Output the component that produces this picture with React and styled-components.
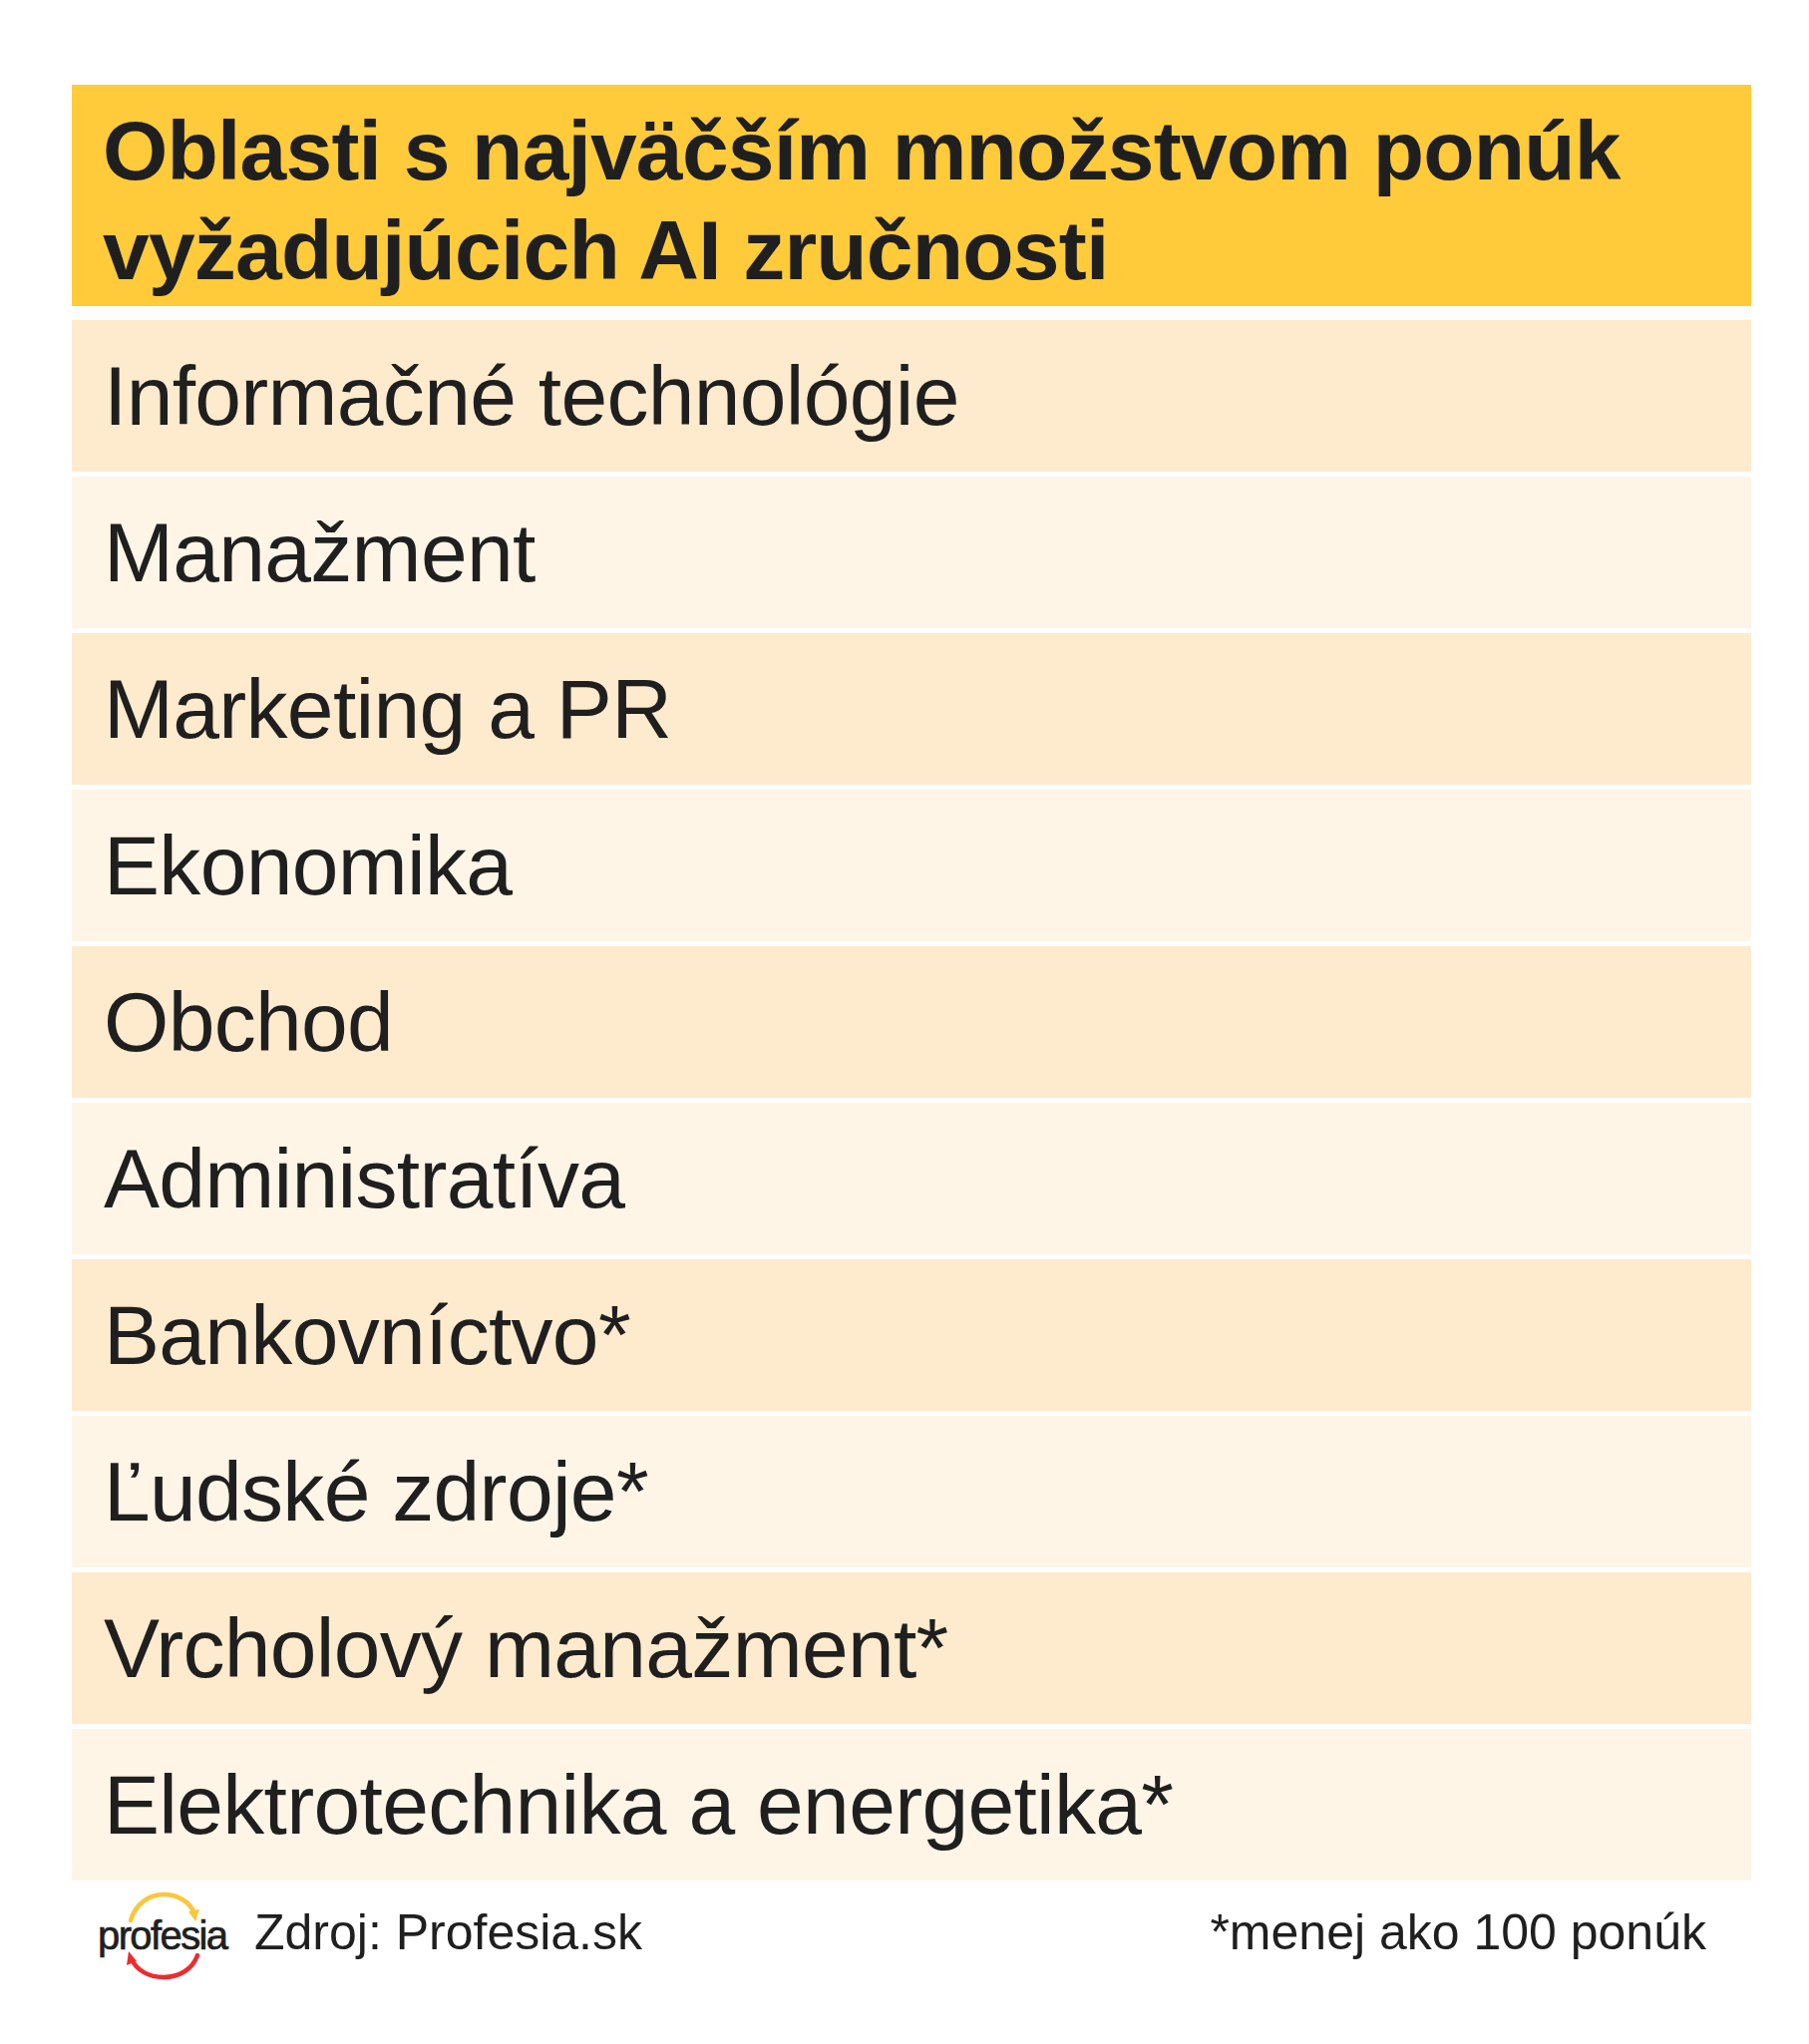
import styled, { createGlobalStyle } from "styled-components";

const GlobalStyle = createGlobalStyle`
  body {
    margin: 0;
    background: #ffffff;
    font-family: "Liberation Sans", Arial, sans-serif;
    color: #1f1f1f;
  }
`;

const Page = styled.div`
  width: 1814px;
  height: 2050px;
  padding: 85px 58px 0 72px;
  box-sizing: border-box;
`;

const Title = styled.h1`
  margin: 0 0 14px;
  padding: 16px 34px 6px 31px;
  background: #ffcb3b;
  font-size: 84px;
  line-height: 100px;
  font-weight: 700;
  letter-spacing: -0.8px;
  color: #1f1f1f;
`;

const List = styled.div`
  display: flex;
  flex-direction: column;
  gap: 5px;
`;

const Row = styled.div`
  height: 152px;
  display: flex;
  align-items: center;
  padding: 0 34px 0 32px;
  background: ${(p) => (p.$alt ? "#fef5e7" : "#feeacd")};
  font-size: 84px;
  letter-spacing: -0.7px;
`;

const Footer = styled.div`
  height: 104px;
  display: flex;
  align-items: center;
  padding: 0 45px 0 26px;
`;

const Source = styled.div`
  display: flex;
  align-items: center;
  gap: 27px;
  font-size: 50px;
`;

const Logo = styled.div`
  position: relative;
  width: 130px;
  height: 92px;
  display: flex;
  align-items: center;
  margin-top: 6px;
`;

const LogoText = styled.span`
  position: relative;
  font-size: 40px;
  letter-spacing: -1.6px;
  -webkit-text-stroke: 0.7px #1f1f1f;
  color: #1f1f1f;
`;

const LogoArcs = styled.svg`
  position: absolute;
  left: 0;
  top: 0;
`;

const Note = styled.div`
  margin-left: auto;
  font-size: 50px;
`;

const areas = [
  "Informačné technológie",
  "Manažment",
  "Marketing a PR",
  "Ekonomika",
  "Obchod",
  "Administratíva",
  "Bankovníctvo*",
  "Ľudské zdroje*",
  "Vrcholový manažment*",
  "Elektrotechnika a energetika*",
];

function ProfesiaLogo() {
  return (
    <Logo>
      <LogoArcs width="130" height="92" viewBox="0 0 130 92">
        <path
          d="M33 31 C38 14 52 5 66 5 C80 5 92 12 97 24"
          fill="none"
          stroke="#fbc63a"
          strokeWidth="4.5"
          strokeLinecap="round"
        />
        <polygon points="91,22 102,20 98,32" fill="#fbc63a" />
        <path
          d="M100 66 C95 80 82 88 66 88 C51 88 39 81 34 70"
          fill="none"
          stroke="#ee2b2f"
          strokeWidth="4.5"
          strokeLinecap="round"
        />
        <polygon points="31,62 39,72 29,76" fill="#ee2b2f" />
      </LogoArcs>
      <LogoText>profesia</LogoText>
    </Logo>
  );
}

export default function App() {
  return (
    <Page>
      <GlobalStyle />
      <Title>
        Oblasti s najväčším množstvom ponúk
        <br />
        vyžadujúcich AI zručnosti
      </Title>
      <List>
        {areas.map((name, i) => (
          <Row key={name} $alt={i % 2 === 1}>
            {name}
          </Row>
        ))}
      </List>
      <Footer>
        <Source>
          <ProfesiaLogo />
          Zdroj: Profesia.sk
        </Source>
        <Note>*menej ako 100 ponúk</Note>
      </Footer>
    </Page>
  );
}
